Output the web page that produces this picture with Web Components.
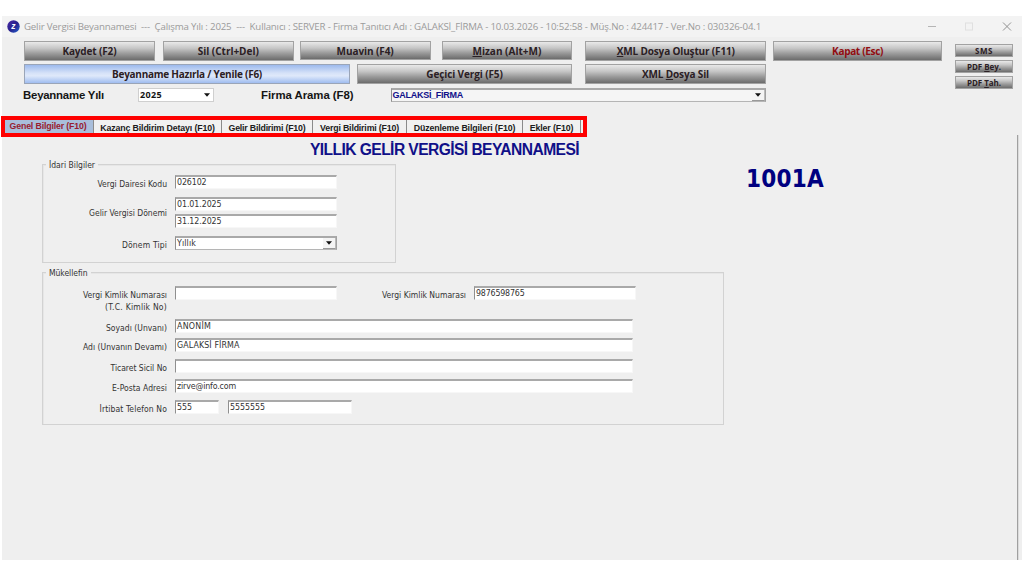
<!DOCTYPE html>
<html lang="tr">
<head>
<meta charset="utf-8">
<title>Gelir Vergisi Beyannamesi</title>
<style>
    body{
        margin:0;
        background:#fff;
        font-family:"Liberation Sans",sans-serif;
    }
</style>
</head>
<body>
<beyanname-penceresi></beyanname-penceresi>
<script>
// Text set to a given width by spreading the letters
class FitText extends HTMLElement{
    constructor(){
        super();
        this.attachShadow({mode:'open'}).innerHTML=`
<style>
    :host{display:inline-block;flex:none;}
    span{display:inline-block;white-space:pre;}
</style>
<span><slot></slot></span>`;
    }

    connectedCallback(){
        const span=this.shadowRoot.querySelector('span');
        const w=Number(this.getAttribute('w'));
        const gap=(w-span.getBoundingClientRect().width)/this.textContent.length;
        span.style.letterSpacing=`${gap}px`;
    }
}

class ToolButton extends HTMLElement{
    constructor(){
        super();
        this.attachShadow({mode:'open'}).innerHTML=`
<style>
    :host{
        display:flex;
        align-items:center;
        justify-content:center;
        box-sizing:border-box;
        height:20px;
        border:1px solid #a2a2a2;
        background:linear-gradient(#e9e9e9,#c6c6c6 35%,#9a9a9a 65%,#6c6c6c);
        color:#2b2024;
        font:bold 10px "Open Sans",sans-serif;
    }
    :host([kind=blue]){
        border-color:#9aa5b8;
        background:linear-gradient(#9dbaed,#d6e2f8 45%,#dfe9fa 60%,#a0bdf0);
    }
    :host([kind=exit]){color:#920c10;}
    :host([kind=small]){height:13px;font-size:8px;}
</style>
<slot></slot>`;
    }
}

class TextField extends HTMLElement{
    constructor(){
        super();
        this.attachShadow({mode:'open'}).innerHTML=`
<style>
    :host{
        display:flex;
        justify-content:space-between;
        box-sizing:border-box;
        height:14px;
        border:1px solid #f7f7f7;
        border-top:2px solid #a9a9a9;
        border-left:1px solid #8f8f8f;
        background:#fff;
        color:#333;
        padding-left:1px;
        font:8.8px/11px "DejaVu Sans Condensed","DejaVu Sans",sans-serif;
        font-stretch:condensed;
    }
    :host([combo]){border-right-color:#a0a0a0;border-bottom-color:#b5b5b5;}
    i{
        display:none;
        width:13px;
        background:#f4f4f4;
        border-right:1px solid #bbb;
        border-bottom:1px solid #999;
        box-sizing:border-box;
        align-items:center;
        justify-content:center;
    }
    :host([combo]) i{display:flex;}
    :host([combo=flat]) i{background:none;border:0;}
</style>
<slot></slot>
<i><svg width="6" height="4"><path d="M0 .3h6L3 3.7z" fill="#111"/></svg></i>`;
    }
}

class FormRow extends HTMLElement{
    constructor(){
        super();
        this.attachShadow({mode:'open'}).innerHTML=`
<style>
    :host{display:flex;height:14px;align-items:flex-start;}
    div{
        width:124px;
        margin-right:8px;
        text-align:right;
        line-height:18px;
        flex:none;
    }
    :host([tall]){height:31px;align-items:center;}
    :host([two]) div{line-height:12px;padding-top:3px;}
</style>
<div><slot name="label"></slot></div>
<slot></slot>`;
    }
}

class GroupBox extends HTMLElement{
    constructor(){
        super();
        this.attachShadow({mode:'open'}).innerHTML=`
<style>
    :host{
        display:block;
        box-sizing:border-box;
        border:1px solid #d2d2d2;
        box-shadow:inset 1px 1px #e6e6e6;
        color:#333;
        font:8.5px "DejaVu Sans Condensed","DejaVu Sans",sans-serif;
        font-stretch:condensed;
    }
    header{height:11px;margin:-6px 0 5px 3px;line-height:13px;}
    header span{display:inline-block;background:#efefef;padding:0 3px;height:11px;}
</style>
<header><span><slot name="legend"></slot></span></header>
<slot></slot>`;
    }
}

class TabItem extends HTMLElement{
    constructor(){
        super();
        this.attachShadow({mode:'open'}).innerHTML=`
<style>
    :host{
        display:flex;
        justify-content:center;
        box-sizing:border-box;
        border-right:1px solid #8b8b8b;
        padding-top:2px;
        color:#1c1c1c;
        font:bold 8.8px/12px "Liberation Sans",sans-serif;
    }
    :host([active]){
        background:#a9bedb;
        color:#981c30;
        padding:0 2px 0 0;
    }
</style>
<slot></slot>`;
    }
}

class TitleBar extends HTMLElement{
    constructor(){
        super();
        this.attachShadow({mode:'open'}).innerHTML=`
<style>
    :host{
        display:flex;
        align-items:center;
        height:21px;
        background:#f3f3f3;
        color:#9b9b9b;
        padding-left:5px;
        font:9.7px "Open Sans",sans-serif;
    }
    .logo{margin-right:4px;}
    .controls{margin-left:167px;}
</style>
<svg class="logo" width="13" height="13" viewBox="0 0 13 13">
    <defs><linearGradient id="g" x1="0" y1="0" x2="1" y2="1"><stop stop-color="#4a2ca8"/><stop offset=".5" stop-color="#28208c"/><stop offset="1" stop-color="#2364d0"/></linearGradient></defs>
    <circle cx="6.5" cy="6.5" r="6.2" fill="url(#g)"/>
    <text x="6.4" y="9.3" text-anchor="middle" font-family="Liberation Sans,sans-serif" font-size="8.5" font-weight="bold" font-style="italic" fill="#fff">z</text>
</svg>
<slot></slot>
<svg class="controls" width="86" height="11" fill="none">
    <path d="M0 5.5h8" stroke="#b5b5b5"/>
    <rect x="37.5" y="2" width="7" height="7" stroke="#e0e0e0"/>
    <path d="M75 1.5l8 8m0-8l-8 8" stroke="#929292"/>
</svg>`;
    }
}

class BeyannamePenceresi extends HTMLElement{
    constructor(){
        super();
        this.attachShadow({mode:'open'}).innerHTML=`
<style>
    :host{
        display:flex;
        flex-direction:column;
        box-sizing:border-box;
        width:1020px;
        height:544px;
        margin:16px 0 0 2px;
        background:#efefef;
    }
    .tools{display:flex;height:51px;padding:4px 0 0 22px;box-sizing:border-box;}
    .main{width:918px;display:flex;flex-direction:column;gap:3px;}
    .line{display:flex;}
    .side{display:flex;flex-direction:column;gap:3px;width:58px;margin:3px 0 0 13px;}
    .search{
        display:flex;
        height:28px;
        padding-left:21px;
        font:bold 11.4px/14px "Liberation Sans",sans-serif;
        color:#151515;
    }
    .search text-field{font:bold 9px/11px "Open Sans",sans-serif;color:#151515;}
    .search .year{width:76px;margin:0 47px 0 34px;border:1px solid #cfcfcf;}
    .search .firm{
        width:375px;
        margin-left:37px;
        background:#f5f5f5;
        color:#10108a;
        font:bold 9px/10px "Liberation Sans",sans-serif;
    }
    .tabs{
        display:flex;
        box-sizing:border-box;
        width:586px;
        height:21px;
        margin-left:-1px;
        border:4px solid #fe0000;
        background:#f1f1f1;
        flex:none;
    }
    .page{
        flex:1;
        margin:-2px 4px 0 0;
        border-right:1px solid #a0a0a0;
        box-shadow:1px 0 #dcdcdc;
        padding-left:40px;
    }
    .head{
        display:flex;
        height:29px;
        color:#101088;
        font:bold 15.6px/18px "Liberation Sans",sans-serif;
        padding:6px 0 0 268px;
        box-sizing:border-box;
    }
    .top{display:flex;justify-content:space-between;width:782px;}
    .code{
        color:#000080;
        font:bold 24px/30px "DejaVu Sans Condensed","DejaVu Sans",sans-serif;
        font-stretch:condensed;
    }
    .stack{display:flex;flex-direction:column;gap:3px;}
    .w1{width:162px;}
    .w2{width:458px;}
</style>
<title-bar><fit-text w="737">Gelir Vergisi Beyannamesi  ---  Çalışma Yılı : 2025  ---  Kullanıcı : SERVER - Firma Tanıtıcı Adı : GALAKSİ_FİRMA - 10.03.2026 - 10:52:58 - Müş.No : 424417 - Ver.No : 030326-04.1</fit-text></title-bar>
<div class="tools">
    <div class="main">
        <div class="line">
            <tool-button style="width:131px"><fit-text w="54">Kaydet (F2)</fit-text></tool-button>
            <tool-button style="width:131px;margin-left:8px"><fit-text w="61">Sil (Ctrl+Del)</fit-text></tool-button>
            <tool-button style="width:131px;height:19px;margin-left:6px"><fit-text w="57">Muavin (F4)</fit-text></tool-button>
            <tool-button style="width:131px;height:19px;margin-left:11px"><fit-text w="69"><u>M</u>izan (Alt+M)</fit-text></tool-button>
            <tool-button style="width:181px;margin-left:13px"><fit-text w="118"><u>X</u>ML Dosya Oluştur (F11)</fit-text></tool-button>
            <tool-button kind="exit" style="width:169px;margin-left:7px"><fit-text w="51">Kapat (Esc)</fit-text></tool-button>
        </div>
        <div class="line">
            <tool-button kind="blue" style="width:326px"><fit-text w="150">Beyanname Hazırla / Yenile (F6)</fit-text></tool-button>
            <tool-button style="width:215px;margin-left:7px"><fit-text w="76.5">Geçici Vergi (F5)</fit-text></tool-button>
            <tool-button style="width:181px;margin-left:13px"><fit-text w="67">XML <u>D</u>osya Sil</fit-text></tool-button>
        </div>
    </div>
    <div class="side">
        <tool-button kind="small"><fit-text w="18">SMS</fit-text></tool-button>
        <tool-button kind="small"><fit-text w="34">PDF <u>B</u>ey.</fit-text></tool-button>
        <tool-button kind="small"><fit-text w="34">PDF <u>T</u>ah.</fit-text></tool-button>
    </div>
</div>
<div class="search">
    <fit-text w="81">Beyanname Yılı</fit-text>
    <text-field class="year" combo="flat"><fit-text w="22">2025</fit-text></text-field>
    <fit-text w="92.5">Firma Arama (F8)</fit-text>
    <text-field class="firm" combo><fit-text w="70.5">GALAKSİ_FİRMA</fit-text></text-field>
</div>
<div class="tabs">
    <tab-item active style="width:89px"><fit-text w="77">Genel Bilgiler (F10)</fit-text></tab-item>
    <tab-item style="width:128px"><fit-text w="114.5">Kazanç Bildirim Detayı (F10)</fit-text></tab-item>
    <tab-item style="width:91px"><fit-text w="77">Gelir Bildirimi (F10)</fit-text></tab-item>
    <tab-item style="width:94px"><fit-text w="79">Vergi Bildirimi (F10)</fit-text></tab-item>
    <tab-item style="width:116px"><fit-text w="101.5">Düzenleme Bilgileri (F10)</fit-text></tab-item>
    <tab-item style="width:58px"><fit-text w="43.5">Ekler (F10)</fit-text></tab-item>
</div>
<div class="page">
    <div class="head"><fit-text w="269">YILLIK GELİR VERGİSİ BEYANNAMESİ</fit-text></div>
    <div class="top">
        <group-box style="width:354px;height:99px">
            <fit-text slot="legend" w="46">İdari Bilgiler</fit-text>
            <form-row>
                <fit-text slot="label" w="69.5">Vergi Dairesi Kodu</fit-text>
                <text-field class="w1"><fit-text w="29.5">026102</fit-text></text-field>
            </form-row>
            <form-row tall style="margin-top:8px">
                <fit-text slot="label" w="78">Gelir Vergisi Dönemi</fit-text>
                <div class="stack">
                    <text-field class="w1"><fit-text w="44.5">01.01.2025</fit-text></text-field>
                    <text-field class="w1"><fit-text w="44.5">31.12.2025</fit-text></text-field>
                </div>
            </form-row>
            <form-row style="margin-top:8px">
                <fit-text slot="label" w="45">Dönem Tipi</fit-text>
                <text-field class="w1" combo><fit-text w="19">Yıllık</fit-text></text-field>
            </form-row>
        </group-box>
        <fit-text class="code" w="78">1001A</fit-text>
    </div>
    <group-box style="width:682px;height:153px;margin-top:9px">
        <fit-text slot="legend" w="38.5">Mükellefin</fit-text>
        <form-row two style="margin-top:8px">
            <fit-text slot="label" w="84">Vergi Kimlik Numarası</fit-text>
            <fit-text slot="label" w="62">(T.C. Kimlik No)</fit-text>
            <text-field class="w1"></text-field>
            <fit-text w="84" style="margin:0 8px 0 45px;line-height:18px">Vergi Kimlik Numarası</fit-text>
            <text-field class="w1"><fit-text w="48.5">9876598765</fit-text></text-field>
        </form-row>
        <form-row style="margin-top:19px">
            <fit-text slot="label" w="61">Soyadı (Unvanı)</fit-text>
            <text-field class="w2"><fit-text w="34">ANONİM</fit-text></text-field>
        </form-row>
        <form-row style="margin-top:5px">
            <fit-text slot="label" w="84">Adı (Unvanın Devamı)</fit-text>
            <text-field class="w2"><fit-text w="62.5">GALAKSİ FİRMA</fit-text></text-field>
        </form-row>
        <form-row style="margin-top:7px">
            <fit-text slot="label" w="56.5">Ticaret Sicil No</fit-text>
            <text-field class="w2"></text-field>
        </form-row>
        <form-row style="margin-top:6px">
            <fit-text slot="label" w="55">E-Posta Adresi</fit-text>
            <text-field class="w2"><fit-text w="59">zirve@info.com</fit-text></text-field>
        </form-row>
        <form-row style="margin-top:7px">
            <fit-text slot="label" w="67.5">İrtibat Telefon No</fit-text>
            <text-field style="width:44px"><fit-text w="15">555</fit-text></text-field>
            <text-field style="width:124px;margin-left:9px"><fit-text w="35">5555555</fit-text></text-field>
        </form-row>
    </group-box>
</div>`;
    }
}

customElements.define('tool-button', ToolButton);
customElements.define('text-field', TextField);
customElements.define('form-row', FormRow);
customElements.define('group-box', GroupBox);
customElements.define('tab-item', TabItem);
customElements.define('title-bar', TitleBar);
customElements.define('beyanname-penceresi', BeyannamePenceresi);
// last, so that the fonts of the surrounding elements are in place when it measures
customElements.define('fit-text', FitText);
</script>
</body>
</html>
